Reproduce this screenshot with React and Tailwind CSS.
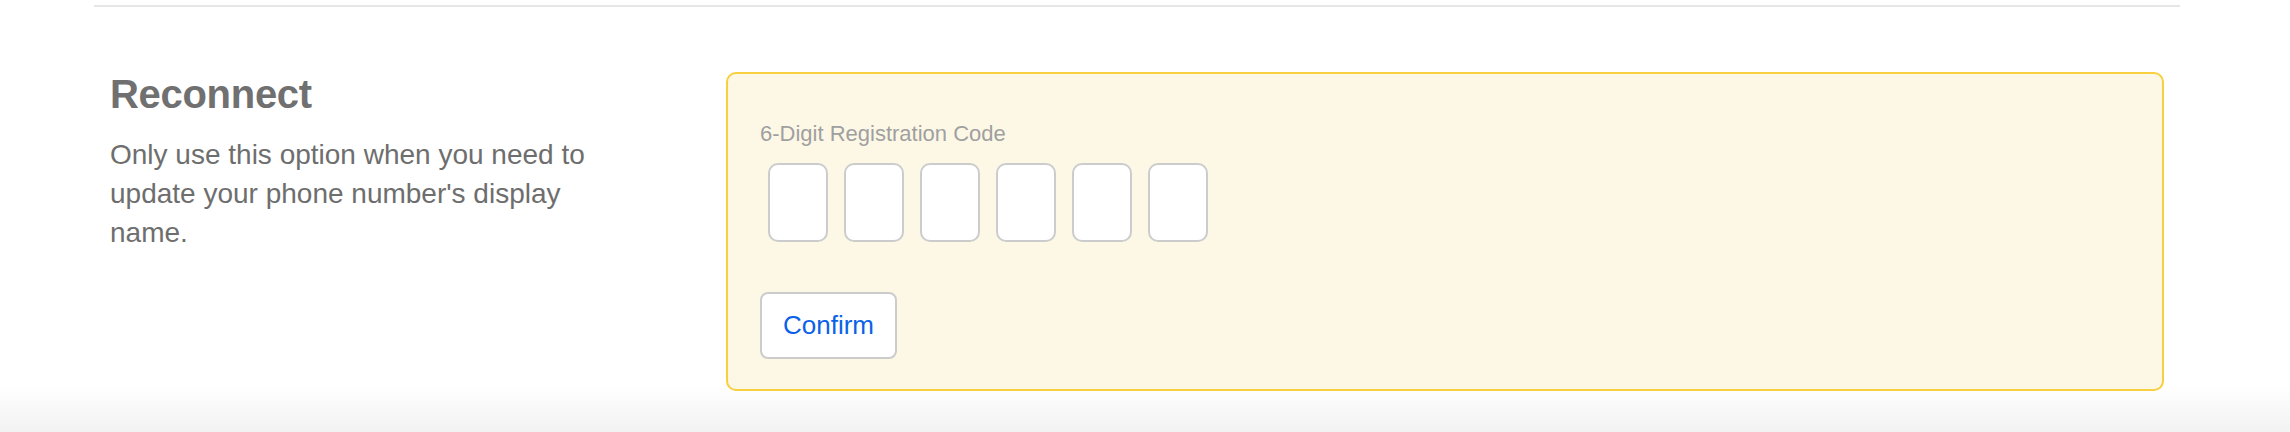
import React from 'react';

const digits = [0, 1, 2, 3, 4, 5];

export default function App() {
    return (
        <div
            className="h-[432px] w-full overflow-hidden bg-[linear-gradient(to_bottom,#ffffff_386px,#f2f2f2_432px)]"
            style={{ fontFamily: '"Liberation Sans", Arial, sans-serif' }}
        >
            <div className="ml-[94px] mr-[110px]">
                {/* Divider */}
                <div className="mt-[5px] h-[2px] bg-[#e6e6e6]" />

                <div className="flex pt-[65px] pl-4 pr-4">
                    {/* Left column */}
                    <div className="w-[520px] shrink-0">
                        <h2 className="text-[40px] leading-[44px] font-bold text-[#707070] tracking-[-0.3px]">
                            Reconnect
                        </h2>
                        <p className="mt-[19px] text-[28px] leading-[39px] text-[#6e6e6e]">
                            Only use this option when you need to update your phone number's display name.
                        </p>
                    </div>

                    {/* Registration card */}
                    <div className="ml-[96px] flex-1 h-[319px] rounded-[10px] border-2 border-[#f8cf3f] bg-[#fdf8e6] p-8">
                        <label className="mt-[11px] block text-[22px] leading-[33px] text-[#a0a0a0]">
                            6-Digit Registration Code
                        </label>
                        <div className="mt-[13px] flex">
                            {digits.map((d) => (
                                <input
                                    key={d}
                                    type="text"
                                    maxLength={1}
                                    className="mx-2 h-[79px] w-[60px] rounded-[10px] border-2 border-[#cccccc] bg-white text-center text-[28px] outline-none"
                                />
                            ))}
                        </div>
                        <button className="mt-[50px] h-[67px] rounded-[8px] border-2 border-[#cccccc] bg-white px-[21px] text-[26px] text-[#0a62e8]">
                            Confirm
                        </button>
                    </div>
                </div>
            </div>
        </div>
    );
}
